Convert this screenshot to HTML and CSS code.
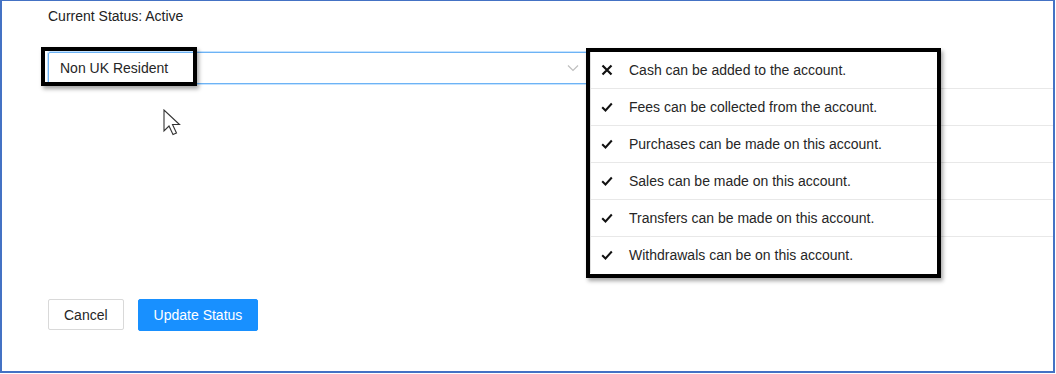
FILE: index.html
```html
<!DOCTYPE html>
<html lang="en">
<head>
    <meta charset="UTF-8">
    <title>Account Status</title>
    <link rel="stylesheet" href="styles.css">
</head>
<body>
    <div class="frame">
        <div class="status">Current Status: Active</div>
        <div class="field">
            <div class="select">
                <span class="select-value">Non UK Resident</span>
                <svg class="chevron" width="12" height="8" viewBox="0 0 12 8">
                    <path d="M1 1.5 L6 6.5 L11 1.5" fill="none" stroke="#bfbfbf" stroke-width="1.2"/>
                </svg>
            </div>
            <!-- permissions dropdown -->
            <ul class="rules">
                <li>
                    <svg class="mark" width="12" height="12" viewBox="0 0 12 12"><path d="M1.5 1.5 L10.5 10.5 M10.5 1.5 L1.5 10.5" stroke="#111" stroke-width="2.2" fill="none"/></svg>
                    Cash can be added to the account.
                </li>
                <li>
                    <svg class="mark" width="12" height="12" viewBox="0 0 12 12"><path d="M1.2 6.2 L4.5 9.5 L10.8 2.5" stroke="#111" stroke-width="2" fill="none"/></svg>
                    Fees can be collected from the account.
                </li>
                <li>
                    <svg class="mark" width="12" height="12" viewBox="0 0 12 12"><path d="M1.2 6.2 L4.5 9.5 L10.8 2.5" stroke="#111" stroke-width="2" fill="none"/></svg>
                    Purchases can be made on this account.
                </li>
                <li>
                    <svg class="mark" width="12" height="12" viewBox="0 0 12 12"><path d="M1.2 6.2 L4.5 9.5 L10.8 2.5" stroke="#111" stroke-width="2" fill="none"/></svg>
                    Sales can be made on this account.
                </li>
                <li>
                    <svg class="mark" width="12" height="12" viewBox="0 0 12 12"><path d="M1.2 6.2 L4.5 9.5 L10.8 2.5" stroke="#111" stroke-width="2" fill="none"/></svg>
                    Transfers can be made on this account.
                </li>
                <li>
                    <svg class="mark" width="12" height="12" viewBox="0 0 12 12"><path d="M1.2 6.2 L4.5 9.5 L10.8 2.5" stroke="#111" stroke-width="2" fill="none"/></svg>
                    Withdrawals can be on this account.
                </li>
            </ul>
            <div class="callout callout-select"></div>
            <div class="callout callout-rules"></div>
            <svg class="cursor" width="19" height="27" viewBox="0 0 19 27">
                <path d="M1 1 L1 22 L6 17 L10 25.5 L13.5 24 L9.5 15.5 L16.5 15.5 Z" fill="#fff" stroke="#333" stroke-width="1.1" stroke-linejoin="miter"/>
            </svg>
        </div>
        <div class="actions">
            <button class="btn">Cancel</button>
            <button class="btn btn-primary">Update Status</button>
        </div>
    </div>
</body>
</html>
```

FILE: styles.css
```css
body {
    margin: 0;
    font-family: 'Liberation Sans', Arial, sans-serif;
    color: #262626;
    background-color: #fff;
}
.frame {
    box-sizing: border-box;
    width: 1055px;
    height: 373px;
    border: 2px solid #4472c4;
    border-top-width: 1px;
    padding: 7px 0 0 46px;
    position: relative;
}
.status {
    font-size: 14px;
    line-height: 16px;
    color: #222;
}
.field {
    position: relative;
    margin-top: 28px;
    height: 212px;
}
.select {
    box-sizing: border-box;
    width: 555px;
    height: 32px;
    border: 1px solid #6db3f5;
    box-shadow: 0 0 0 1px rgba(24, 144, 255, 0.25);
    border-radius: 2px;
    display: flex;
    align-items: center;
    justify-content: space-between;
    padding: 0 23px 0 11px;
    font-size: 14px;
}
.rules {
    list-style: none;
    margin: 0;
    padding: 0;
    position: absolute;
    top: 0;
    left: 543px;
    width: 462px;
    background-color: #fff;
    box-shadow: -1px 0 0 #e0e0e0;
}
.rules li {
    height: 36px;
    border-bottom: 1px solid #e8e8e8;
    display: flex;
    align-items: center;
    font-size: 14px;
    color: #262626;
}
.rules li:last-child {
    border-bottom: none;
}
.mark {
    margin: 0 16px 0 10px;
    flex-shrink: 0;
}
.callout {
    position: absolute;
    box-sizing: border-box;
    border: 4px solid #000;
    box-shadow: 2px 3px 4px rgba(0, 0, 0, 0.35);
}
.callout-select {
    top: -5px;
    left: -7px;
    width: 156px;
    height: 39px;
}
.callout-rules {
    top: -4px;
    left: 538px;
    width: 355px;
    height: 230px;
}
.cursor {
    position: absolute;
    top: 57px;
    left: 115px;
}
.actions {
    display: flex;
    gap: 14px;
    margin-top: 35px;
}
.btn {
    font-family: 'Liberation Sans', Arial, sans-serif;
    font-size: 14px;
    height: 31px;
    padding: 0 15px;
    border: 1px solid #d9d9d9;
    border-radius: 2px;
    background-color: #fff;
    color: #262626;
}
.btn-primary {
    height: 32px;
    background-color: #1890ff;
    border-color: #1890ff;
    color: #fff;
    padding: 0 15px;
}
```
